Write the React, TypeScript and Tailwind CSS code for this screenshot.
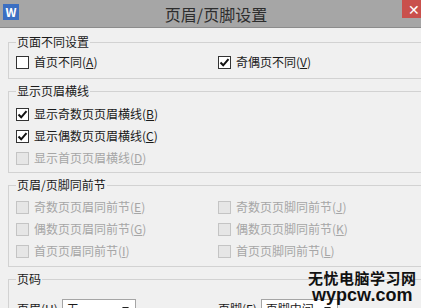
import React from 'react';

const font = { fontFamily: '"Noto Sans CJK SC", "Noto Sans", sans-serif' };

function Check({ checked, disabled }: { checked?: boolean; disabled?: boolean }) {
  return (
    <span
      className={
        'flex h-[13px] w-[13px] shrink-0 items-center justify-center border ' +
        (disabled ? 'border-[#c4c4c4] bg-[#e6e6e6]' : 'border-[#333] bg-white')
      }
    >
      {checked && (
        <svg width="11" height="11" viewBox="0 0 11 11">
          <path d="M1.5 5.5 L4.2 8.3 L9.5 2.2" fill="none" stroke="#111" strokeWidth="2" />
        </svg>
      )}
    </span>
  );
}

function Item({ text, k, checked, disabled }: { text: string; k: string; checked?: boolean; disabled?: boolean }) {
  return (
    <div className={'flex h-[22px] items-center gap-[5px] ' + (disabled ? 'text-[#a6a6a6]' : 'text-[#1a1a1a]')}>
      <Check checked={checked} disabled={disabled} />
      <span>
        {text}(<span className="underline">{k}</span>)
      </span>
    </div>
  );
}

function Group({ title, className, children }: { title: string; className?: string; children: React.ReactNode }) {
  return (
    <fieldset className={'w-[440px] border border-[#d2d2d2] pl-[7px] ' + (className ?? '')}>
      <legend className="px-[1px] leading-[16px] text-[#1a1a1a]">{title}</legend>
      {children}
    </fieldset>
  );
}

function Select({ value, w }: { value: string; w: string }) {
  return (
    <div className={'flex h-[20px] items-center justify-between border border-[#a5a5a5] bg-white pl-[4px] pr-[6px] text-[#1a1a1a] ' + w}>
      <span>{value}</span>
      <svg width="7" height="4" viewBox="0 0 7 4">
        <path d="M0 0 L7 0 L3.5 4 Z" fill="#222" />
      </svg>
    </div>
  );
}

export default function App() {
  return (
    <div className="relative h-[308px] w-[421px] overflow-hidden bg-[#f0f0f0] text-[12px]" style={font}>
      <div className="relative flex h-[28px] items-center border-b border-[#8c8c8c] bg-[#a6a6a6]">
        <div className="absolute left-[3px] top-[4px] flex h-[16px] w-[16px] items-center justify-center bg-[#3b6fc2] text-[12px] font-bold leading-none text-white">
          W
        </div>
        <div className="flex-1 pl-[11px] text-center text-[16px] text-[#2d2d2d]">页眉/页脚设置</div>
        <div className="absolute right-0 top-0 flex h-[18px] w-[19px] items-center justify-end bg-[#c9504c] pr-[1px] text-[14px] leading-none text-white">
          ✕
        </div>
      </div>

      <div className="pl-[8px]">
        <Group title="页面不同设置" className="mt-[6px] pb-[5px]">
          <div className="grid grid-cols-[202px_1fr] pt-[1px]">
            <Item text="首页不同" k="A" />
            <Item text="奇偶页不同" k="V" checked />
          </div>
        </Group>

        <Group title="显示页眉横线" className="mt-[4px] pb-[3px]">
          <div className="pt-[4px]">
            <Item text="显示奇数页页眉横线" k="B" checked />
            <Item text="显示偶数页页眉横线" k="C" checked />
            <Item text="显示首页页眉横线" k="D" disabled />
          </div>
        </Group>

        <Group title="页眉/页脚同前节" className="mt-[4px] pb-[4px]">
          <div className="grid grid-cols-[202px_1fr] pt-[3px]">
            <div>
              <Item text="奇数页页眉同前节" k="E" disabled />
              <Item text="偶数页页眉同前节" k="G" disabled />
              <Item text="首页页眉同前节" k="I" disabled />
            </div>
            <div>
              <Item text="奇数页页脚同前节" k="J" disabled />
              <Item text="偶数页页脚同前节" k="K" disabled />
              <Item text="首页页脚同前节" k="L" disabled />
            </div>
          </div>
        </Group>

        <Group title="页码" className="mt-[4px] pb-[4px]">
          <div className="grid grid-cols-[202px_1fr] pt-[12px] text-[#1a1a1a]">
            <div className="flex items-center gap-[4px] pl-[1px]">
              <span>页眉(H)</span>
              <Select value="无" w="w-[74px]" />
            </div>
            <div className="flex items-center gap-[4px]">
              <span>页脚(F)</span>
              <Select value="页脚中间" w="w-[77px]" />
            </div>
          </div>
        </Group>
      </div>

      <div className="absolute left-[308px] top-[270px] flex flex-col items-center font-bold leading-none text-[#111]">
        <span className="text-[15px] tracking-[0.5px]">无忧电脑学习网</span>
        <span className="mt-[1px] text-[18px]" style={{ fontFamily: '"Liberation Sans", Arial, sans-serif' }}>
          wypcw.com
        </span>
      </div>
    </div>
  );
}
